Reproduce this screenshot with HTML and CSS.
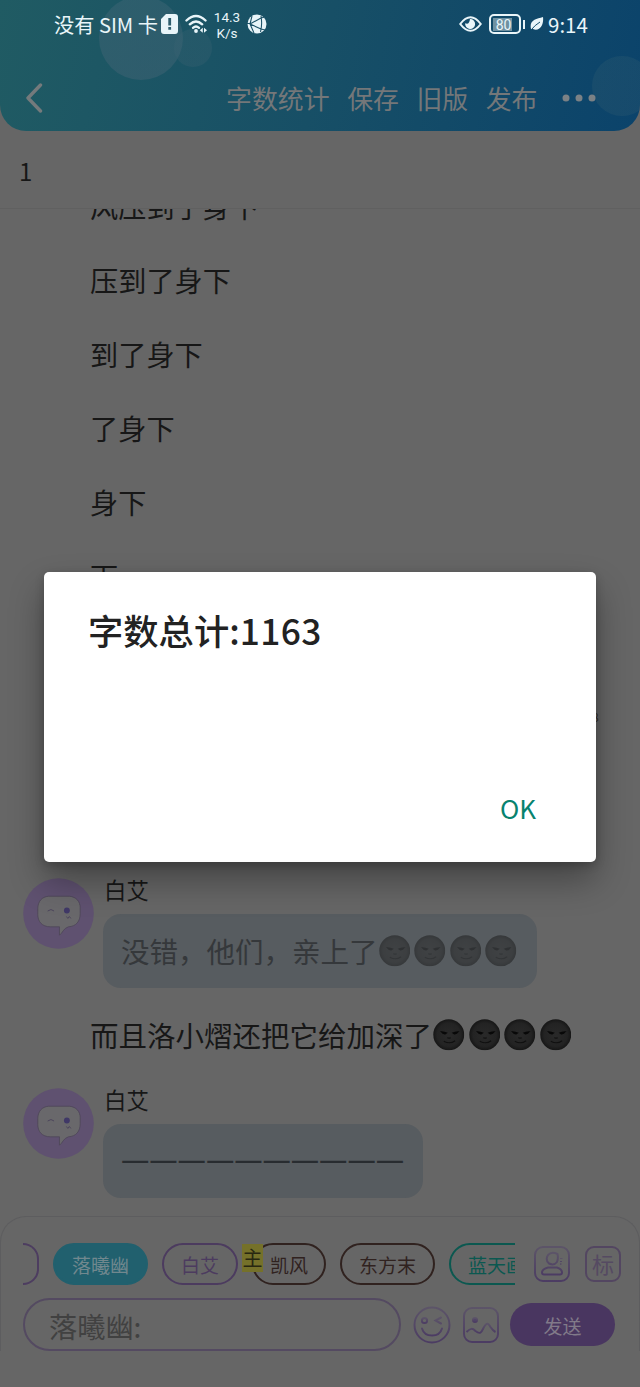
FILE: index.html
```html
<!DOCTYPE html>
<html lang="zh-CN">
<head>
<meta charset="utf-8">
<title>字数统计</title>
<link rel="stylesheet" href="styles.css">
</head>
<body>
<div class="screen">
  <header class="header">
    <i class="bubble bubble-large"></i><i class="bubble bubble-small"></i><i class="bubble bubble-right"></i>
    <div class="status">
      <span class="carrier">没有 SIM 卡</span>
      <svg class="sim" width="17" height="20" viewBox="0 0 17 20"><path fill="#e9f5f9" fill-rule="evenodd" d="M5 0H14a3 3 0 0 1 3 3v14a3 3 0 0 1-3 3H3a3 3 0 0 1-3-3V5ZM7.300 4v7.500h2.800V4Zm0 9v2.800h2.800v-2.800Z"/></svg>
      <svg class="wifi" width="23" height="20" viewBox="0 0 23 20"><g fill="none" stroke="#e9f5f9" stroke-width="2.400" stroke-linecap="round"><path d="M1.500 6.500Q11-2.500 20.500 6.500"/><path d="M4.800 10.300Q11 4.500 17.200 10.300"/><path d="M8 13.800Q11 11.300 14 13.800"/></g><circle cx="11" cy="17" r="1.900" fill="#e9f5f9"/><path fill="#e9f5f9" d="m14.800 16.300 3-2.500v5zm4.200-2.500 3 2.500-3 2.500z"/></svg>
      <span class="speed">14.3<br>K/s</span>
      <svg class="globe" width="20" height="20" viewBox="0 0 20 20"><circle cx="10" cy="10" r="9.500" fill="#e9f5f9"/><path d="M3 10 14 4M3 10l11 5M14 2q1.500 8-.5 16M0 9.500h3M14 4l4-1M14 15l4 1M5 2 3 10l4 9" fill="none" stroke="#1d5268" stroke-width="1.100"/></svg>
      <span class="spacer"></span>
      <svg class="eye" width="23" height="16" viewBox="0 0 23 16"><path d="M1.200 8Q11.500-5.500 21.800 8 11.500 21.500 1.200 8Z" fill="none" stroke="#e9f5f9" stroke-width="2"/><path d="M11 3a5 5 0 1 1-4.800 4.200q4 2 4.800-4.200Z" fill="#e9f5f9"/></svg>
      <span class="battery"><b>80</b></span>
      <i class="battery-tip"></i>
      <svg class="leaf" width="14" height="14" viewBox="0 0 14 14"><path d="M1 12C-1 3 6 2 13 0c1 7-3 15-10 12Z" fill="#e9f5f9"/><path d="M1 13Q5 8 10 5" stroke="#124e6d" fill="none"/></svg>
      <span class="time">9:14</span>
    </div>
    <nav class="nav">
      <svg class="back" width="18" height="30" viewBox="0 0 18 30"><path d="M15.500 2 3 15l12.500 13" fill="none" stroke="#747a7c" stroke-width="3.400" stroke-linecap="round" stroke-linejoin="round"/></svg>
      <span>字数统计</span><span>保存</span><span>旧版</span><span>发布</span>
      <svg class="more" width="34" height="8" viewBox="0 0 34 8" fill="#7b8185"><circle cx="4" cy="4" r="3.500"/><circle cx="17" cy="4" r="3.500"/><circle cx="30" cy="4" r="3.500"/></svg>
    </nav>
  </header>
  <div class="title">1</div>
  <main class="chat">
    <p class="line first">风压到了身下</p>
    <p class="line">压到了身下</p>
    <p class="line">到了身下</p>
    <p class="line">了身下</p>
    <p class="line">身下</p>
    <p class="line">下</p>
    <p class="count">8</p>
    <section class="message">
      <svg class="avatar"><use href="#face"/></svg>
      <div><div class="name">白艾</div><div class="speech faded"><span>没错，他们，亲上了</span><span class="moons"><svg><use href="#moon"/></svg><svg><use href="#moon"/></svg><svg><use href="#moon"/></svg><svg><use href="#moon"/></svg></span></div></div>
    </section>
    <p class="narration"><span>而且洛小熠还把它给加深了</span><span class="moons"><svg><use href="#moon"/></svg><svg><use href="#moon"/></svg><svg><use href="#moon"/></svg><svg><use href="#moon"/></svg></span></p>
    <section class="message second">
      <svg class="avatar"><use href="#face"/></svg>
      <div><div class="name">白艾</div><div class="speech dashes">一一一一一一一一一一</div></div>
    </section>
  </main>
  <footer class="composer">
    <div class="tools">
      <div class="roles">
        <span class="role cut"></span><span class="role active">落曦幽</span><span class="role purple">白艾</span><span class="role brown lead"><b>主</b>凯风</span><span class="role brown">东方末</span><span class="role teal">蓝天画</span>
      </div>
      <svg class="person" width="36" height="36" viewBox="0 0 36 36" fill="none" stroke="url(#violet)" stroke-width="2"><rect x="1" y="1" width="34" height="34" rx="8"/><path d="M23.500 8q-6-3-9.500 1-3 5 1 8.500 5 2.500 8-1.500 1.500-4 .5-8ZM14 21.500h9q5 1.500 5 5 0 2-2 2H10q-2 0-2-2 0-3.500 6-5Z"/><path d="M26 12.500h2.500M26 15.500h2M26 18h1.500" stroke-width="1"/></svg>
      <span class="mark">标</span>
    </div>
    <div class="entry">
      <div class="input">落曦幽:</div>
      <svg class="smile" width="38" height="38" viewBox="0 0 38 38" fill="none" stroke="url(#violet)" stroke-width="2"><circle cx="19" cy="19" r="17.500"/><circle cx="11.500" cy="14.500" r="2.600"/><path d="m28 11.500-5.500 3 5.500 3M9 22.500q2 7 10 7t10-7" stroke-linecap="round"/></svg>
      <svg class="picture" width="36" height="36" viewBox="0 0 36 36" fill="none" stroke="url(#violet)" stroke-width="2"><rect x="1" y="1" width="34" height="34" rx="8"/><path d="M3.500 25c4-4 6-4 9-1 5 4 6 1 8-3 3-6 5-5 7-1 2 3 3 4 5 5"/><circle cx="12" cy="13" r="2" fill="#50436a"/></svg>
      <button class="send">发送</button>
    </div>
  </footer>
</div>
<div class="dialog" role="dialog"><h1>字数总计:<span>1163</span></h1><button>OK</button></div>
<svg class="defs" width="0" height="0"><defs>
  <linearGradient id="violet" x1="0" y1="0" x2="0" y2="1"><stop stop-color="#5c5468"/><stop offset="1" stop-color="#4c3c63"/></linearGradient>
  <radialGradient id="dark"><stop stop-color="#292929"/><stop offset=".75" stop-color="#232323"/><stop offset="1" stop-color="#161616"/></radialGradient>
  <symbol id="moon" viewBox="0 0 32 32"><circle cx="16" cy="16" r="15.700" fill="url(#dark)"/><path d="M7 12.500q4-.500 8 1.500l-2.500 1.700q-3 .3-4.500-2.500m19-.7q-4-.5-8 1.500l2.500 1.700q3 .3 4.500-2.500" fill="#080808"/><path d="M11 22.500q6 3.500 11.500-.5M14.500 19q2 .8 3.500 0" fill="none" stroke="#101010" stroke-width="1.200"/></symbol>
  <symbol id="face" viewBox="0 0 72 72"><circle cx="36" cy="36" r="35.800" fill="#5f5170"/><path d="M26 18.500H47C54 19 58 24 58 30v6C58 44 54 49 46 49.500 41 51 40 56 37 58V49.500H28C19 49.500 15 44 15 37v-6C15 24 19 19 26 18.500Z" fill="#69686b" stroke="#4d4557" stroke-width=".8"/><path d="M25 33.500q3.500-3 6.500 0M44 39l1.500 2 1.500-2 1.500 2" fill="none" stroke="#4c455b"/><circle cx="44.500" cy="33" r="3" fill="#403867"/></symbol>
</defs></svg>
</body>
</html>
```
FILE: styles.css
```css
* { box-sizing: border-box; }
body { margin: 0; background: #666; color: #171717; font-family: "Noto Sans CJK SC", sans-serif; }
p, h1 { margin: 0; }
button { border: 0; font-family: inherit; }
svg { flex: none; display: block; }
.screen { height: 1387px; overflow: hidden; display: flex; flex-direction: column; }
.header { position: relative; height: 131px; flex: none; overflow: hidden; border-radius: 0 0 26px 26px; background: linear-gradient(103deg, #205b63 0%, #174f66 50%, #0b436b 100%); }
.bubble { position: absolute; border-radius: 50%; background: linear-gradient(#38637299, #3b617199); }
.bubble-large { width: 84px; height: 84px; left: 99px; top: -4px; }
.bubble-small { width: 38px; height: 38px; left: 174px; top: 29px; opacity: .55; }
.bubble-right { width: 60px; height: 60px; left: 592px; top: 56px; opacity: .4; }
.status { position: relative; display: flex; align-items: center; height: 48px; padding: 0 52px 0 54px; color: #e9f5f9; }
.carrier { font-size: 20.2px; white-space: nowrap; width: 107px; }
.wifi { margin-left: 7px; }
.speed { font: 13.5px/16px Roboto, sans-serif; text-align: center; width: 28px; margin-left: 5px; padding-top: 1px; }
.globe { margin-left: 6px; }
.spacer { flex: 1; }
.eye { margin-right: 2px; }
.battery { margin-left: 5px; width: 32px; height: 20px; border: 2px solid #e9f5f9; border-radius: 5px; display: flex; padding: 1.5px; }
.battery b { display: block; width: 19px; height: 13px; background: #6f91a1; font: 400 14px/14px Roboto, sans-serif; text-align: center; padding-left: 3px; }
.battery-tip { width: 2px; height: 9px; background: #e9f5f9; margin-left: 2px; }
.leaf { margin-left: 5px; }
.time { font: 20.5px/24px "Noto Sans CJK SC", sans-serif; margin-left: 4px; width: 40px; white-space: nowrap; }
.nav { position: relative; display: flex; align-items: center; height: 100px; padding: 0 44px 0 25px; font-size: 25.9px; line-height: 36px; color: #747779; gap: 17.5px; }
.nav .back { margin-right: auto; }
.nav .more { margin-left: 7px; }
.title { height: 78px; flex: none; border-bottom: 1px solid #606060; padding: 20px 19px; font-size: 24px; line-height: 40px; }
.chat { height: 1007px; flex: none; overflow: hidden; padding-top: 35px; }
.line { height: 74px; line-height: 74px; font-size: 28.2px; padding-left: 90px; }
.line.first { margin-top: -75px; }
.count { height: 22px; font-size: 12px; line-height: 22px; padding-left: 592px; margin-top: 93px; color: #342d27; }
.message { display: flex; height: 112px; padding-left: 23px; gap: 9px; margin-top: 148px; }
.avatar { width: 71px; height: 71px; margin-top: 2px; }
.name { font-size: 22.4px; line-height: 27px; height: 38px; padding-left: 1px; }
.speech { height: 74px; border-radius: 18px; background: #575c60; padding: 0 18px; font-size: 28.5px; line-height: 74px; color: #35383b; display: flex; align-items: center; width: 434px; white-space: nowrap; }
.speech.dashes { width: 320px; font-size: 28.3px; color: #282c30; }
.moons { display: flex; gap: 4px; margin-left: 1px; }
.moons svg { width: 31.5px; height: 31.5px; }
.faded .moons { opacity: .5; }
.narration { display: flex; align-items: center; font-size: 28.5px; height: 74px; line-height: 74px; padding-left: 90px; margin-top: 10px; white-space: nowrap; }
.message.second { margin-top: 14px; }
.composer { height: 135px; flex: none; border: 1px solid #5d5d5f; border-bottom: 0; border-radius: 26px 26px 0 0; padding: 26px 18px 0 22px; }
.tools { display: flex; align-items: center; height: 42px; }
.roles { display: flex; align-items: center; width: 493px; overflow: hidden; gap: 14px; }
.role { height: 42px; border: 2px solid; border-radius: 21px; padding: 0 17px; font-size: 19px; line-height: 39px; flex: none; white-space: nowrap; }
.role.cut { width: 16px; border-left: 0; border-radius: 0 21px 21px 0; padding: 0; color: #4d3d60; }
.role.active { border-color: #21606e; background: #21606e; color: #71888e; }
.role.purple { color: #4c3b5f; }
.role.brown { color: #30221f; }
.role.teal { color: #0b5850; }
.role.lead { position: relative; width: 74px; padding-left: 16px; padding-right: 0; }
.lead b { position: absolute; left: -12px; top: -1px; width: 21px; height: 28px; background: #75712a; color: #282711; font-weight: 400; font-size: 20px; line-height: 27px; text-align: center; }
.person { margin-left: 19px; }
.mark { width: 36px; height: 36px; margin-left: 15px; border: 2px solid #534661; border-radius: 9px; font-size: 22px; line-height: 30px; text-align: center; color: #554a62; }
.entry { display: flex; align-items: center; margin-top: 13px; }
.input { width: 378px; height: 53px; border: 2px solid #544a61; border-radius: 27px; padding-left: 24px; font-size: 28.2px; line-height: 51px; color: #414141; }
.smile { margin-left: 12px; }
.picture { margin-left: 12px; }
.send { width: 105px; height: 43px; margin-left: 11px; border-radius: 22px; background: #493660; color: #817a89; font-size: 19px; line-height: 43px; padding: 1px 0 0; }
.dialog { position: absolute; left: 44px; top: 572px; width: 552px; height: 290px; border-radius: 5px; background: #fff; padding: 32px 60px 32px 44px; display: flex; flex-direction: column; justify-content: space-between; box-shadow: 0 18px 35px #0005, 0 3px 10px #0003; }
.dialog h1 { font-size: 35.3px; line-height: 51px; font-weight: 500; color: #222; }
.dialog h1 span { letter-spacing: .4px; }
.dialog button { align-self: flex-end; padding: 0; background: none; color: #07836f; font-size: 26px; font-weight: 400; line-height: 44px; }
.defs { position: absolute; }
```
